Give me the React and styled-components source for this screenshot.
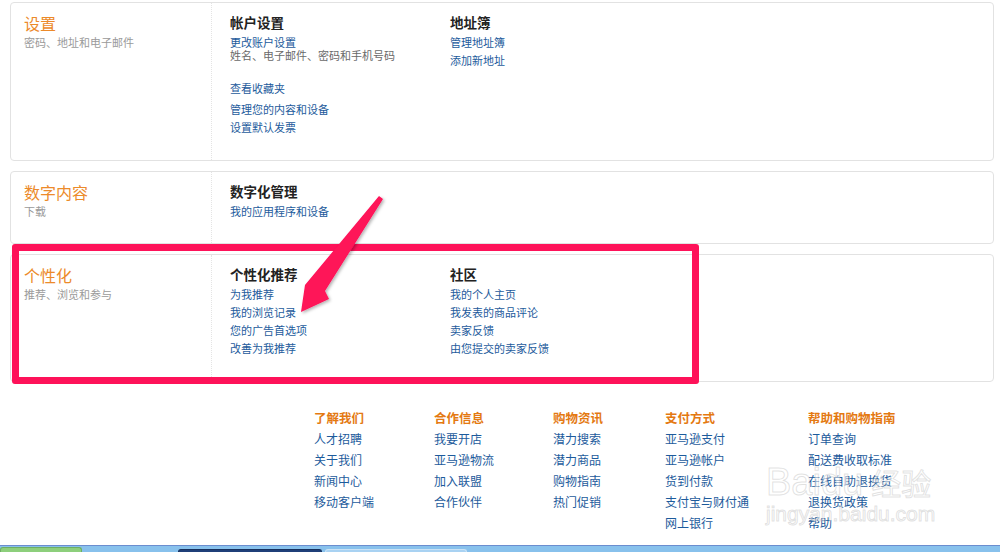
import styled, { createGlobalStyle } from 'styled-components';

const GlobalStyle = createGlobalStyle`
  html, body {
    margin: 0;
    padding: 0;
    background: #fff;
  }
  body {
    font-family: "Noto Sans CJK SC", "Noto Sans", sans-serif;
  }
`;

const Page = styled.div`
  position: relative;
  width: 1000px;
  height: 552px;
  overflow: hidden;
  display: flex;
  flex-direction: column;
`;

const Cards = styled.div`
  padding: 2px 6px 0 10px;
  display: flex;
  flex-direction: column;
  gap: 10px;
`;

const Card = styled.section`
  display: grid;
  grid-template-columns: 201px 1fr;
  border: 1px solid #e2e2e2;
  border-radius: 4px;
  background: #fff;
`;

const Side = styled.div`
  padding: 10px 0 0 13px;
  border-right: 1px dotted #e4e4e4;
`;

const SideTitle = styled.div`
  font-size: 16px;
  line-height: 20px;
  color: #ec8a2a;
`;

const SideSub = styled.div`
  margin-top: 1px;
  font-size: 11px;
  line-height: 16px;
  color: #9a9a9a;
`;

const Body = styled.div`
  display: flex;
  padding: 10px 0 ${(p) => p.$bottom}px 18px;
`;

const Column = styled.div`
  width: 220px;
  display: flex;
  flex-direction: column;
`;

const ColHeading = styled.div`
  font-size: 13.5px;
  font-weight: bold;
  line-height: 18px;
  color: #222;
  margin-bottom: 2px;
`;

const Item = styled.a`
  font-size: 11px;
  line-height: 18px;
  color: #1d5b9c;
  text-decoration: none;
  margin-top: ${(p) => p.$gap || 0}px;
`;

const Note = styled.div`
  font-size: 11px;
  line-height: 14px;
  color: #6a6a6a;
  margin-top: -3px;
`;

const RedBox = styled.div`
  position: absolute;
  left: 12px;
  top: 244px;
  width: 687px;
  height: 140px;
  box-sizing: border-box;
  border: 7px solid #fe1259;
  border-radius: 3px;
  pointer-events: none;
`;

const Overlay = styled.svg`
  position: absolute;
  left: 0;
  top: 0;
  pointer-events: none;
`;

const Footer = styled.footer`
  display: flex;
  padding: 25px 0 0 314px;
`;

const FooterCol = styled.div`
  width: ${(p) => p.$w}px;
  display: flex;
  flex-direction: column;
`;

const FooterHead = styled.div`
  font-size: 12.5px;
  font-weight: bold;
  line-height: 21px;
  color: #e47911;
`;

const FooterLink = styled.a`
  font-size: 12px;
  line-height: 21px;
  color: #1d5b9c;
  text-decoration: none;
`;

const Watermark = styled.div`
  position: absolute;
  left: 766px;
  top: 462px;
  font-family: "Liberation Sans", Arial, sans-serif;
  color: rgba(255, 255, 255, 0.5);
  -webkit-text-stroke: 1px rgba(170, 170, 170, 0.35);
  pointer-events: none;
`;

const WmBig = styled.div`
  font-size: 38px;
  line-height: 40px;
  display: flex;
  gap: 8px;
  span:last-child {
    font-family: "Noto Sans CJK SC", sans-serif;
    font-size: 30px;
  }
`;

const WmSmall = styled.div`
  font-size: 21px;
  line-height: 24px;
`;

const Taskbar = styled.div`
  margin-top: auto;
  height: 6px;
  border-top: 1px solid #6b8dcf;
  background: #88c1ec;
  position: relative;
`;

const TaskButton = styled.div`
  position: absolute;
  bottom: 0;
  left: ${(p) => p.$x}px;
  width: ${(p) => p.$w}px;
  height: ${(p) => p.$h}px;
  background: ${(p) => p.$bg};
  border-radius: 3px 3px 0 0;
  border: 1px solid ${(p) => p.$line};
  border-bottom: none;
  box-sizing: border-box;
`;

const sections = [
  {
    title: '设置',
    sub: '密码、地址和电子邮件',
    bottom: 24,
    cols: [
      {
        head: '帐户设置',
        items: [
          { t: '更改账户设置' },
          { note: '姓名、电子邮件、密码和手机号码' },
          { t: '查看收藏夹', gap: 17 },
          { t: '管理您的内容和设备', gap: 3 },
          { t: '设置默认发票' },
        ],
      },
      { head: '地址簿', items: [{ t: '管理地址簿' }, { t: '添加新地址' }] },
    ],
  },
  {
    title: '数字内容',
    sub: '下载',
    bottom: 23,
    cols: [{ head: '数字化管理', items: [{ t: '我的应用程序和设备' }] }],
  },
  {
    title: '个性化',
    sub: '推荐、浏览和参与',
    bottom: 24,
    cols: [
      {
        head: '个性化推荐',
        items: [{ t: '为我推荐' }, { t: '我的浏览记录' }, { t: '您的广告首选项' }, { t: '改善为我推荐' }],
      },
      {
        head: '社区',
        items: [{ t: '我的个人主页' }, { t: '我发表的商品评论' }, { t: '卖家反馈' }, { t: '由您提交的卖家反馈' }],
      },
    ],
  },
];

const footer = [
  { w: 120, head: '了解我们', links: ['人才招聘', '关于我们', '新闻中心', '移动客户端'] },
  { w: 119, head: '合作信息', links: ['我要开店', '亚马逊物流', '加入联盟', '合作伙伴'] },
  { w: 112, head: '购物资讯', links: ['潜力搜索', '潜力商品', '购物指南', '热门促销'] },
  { w: 143, head: '支付方式', links: ['亚马逊支付', '亚马逊帐户', '货到付款', '支付宝与财付通', '网上银行'] },
  { w: 150, head: '帮助和购物指南', links: ['订单查询', '配送费收取标准', '在线自助退换货', '退换货政策', '帮助'] },
];

export default function App() {
  return (
    <Page>
      <GlobalStyle />
      <Cards>
        {sections.map((s) => (
          <Card key={s.title}>
            <Side>
              <SideTitle>{s.title}</SideTitle>
              <SideSub>{s.sub}</SideSub>
            </Side>
            <Body $bottom={s.bottom}>
              {s.cols.map((c) => (
                <Column key={c.head}>
                  <ColHeading>{c.head}</ColHeading>
                  {c.items.map((it, i) =>
                    it.note ? (
                      <Note key={i}>{it.note}</Note>
                    ) : (
                      <Item key={i} href="#" $gap={it.gap}>
                        {it.t}
                      </Item>
                    )
                  )}
                </Column>
              ))}
            </Body>
          </Card>
        ))}
      </Cards>

      <Footer>
        {footer.map((f) => (
          <FooterCol key={f.head} $w={f.w}>
            <FooterHead>{f.head}</FooterHead>
            {f.links.map((l) => (
              <FooterLink key={l} href="#">
                {l}
              </FooterLink>
            ))}
          </FooterCol>
        ))}
      </Footer>

      <Taskbar>
        <TaskButton $x={0} $w={82} $h={5} $bg="#8dcf7c" $line="#6fae62" />
        <TaskButton $x={178} $w={144} $h={3} $bg="#1f3f78" $line="#16305e" />
        <TaskButton $x={325} $w={142} $h={3} $bg="#a9d2f2" $line="#c9e2f6" />
      </Taskbar>

      <RedBox />

      <Overlay width="1000" height="552" viewBox="0 0 1000 552">
        <defs>
          <filter id="sh" x="-20%" y="-20%" width="140%" height="140%">
            <feDropShadow dx="1.5" dy="1.5" stdDeviation="1.5" floodColor="#000" floodOpacity="0.3" />
          </filter>
        </defs>
        <polygon
          points="379,196 383,199 325,291 329,299 301,312 305,285"
          fill="#fe1259"
          filter="url(#sh)"
        />
      </Overlay>

      <Watermark>
        <WmBig>
          <span>Baidu</span>
          <span>经验</span>
        </WmBig>
        <WmSmall>jingyan.baidu.com</WmSmall>
      </Watermark>
    </Page>
  );
}
